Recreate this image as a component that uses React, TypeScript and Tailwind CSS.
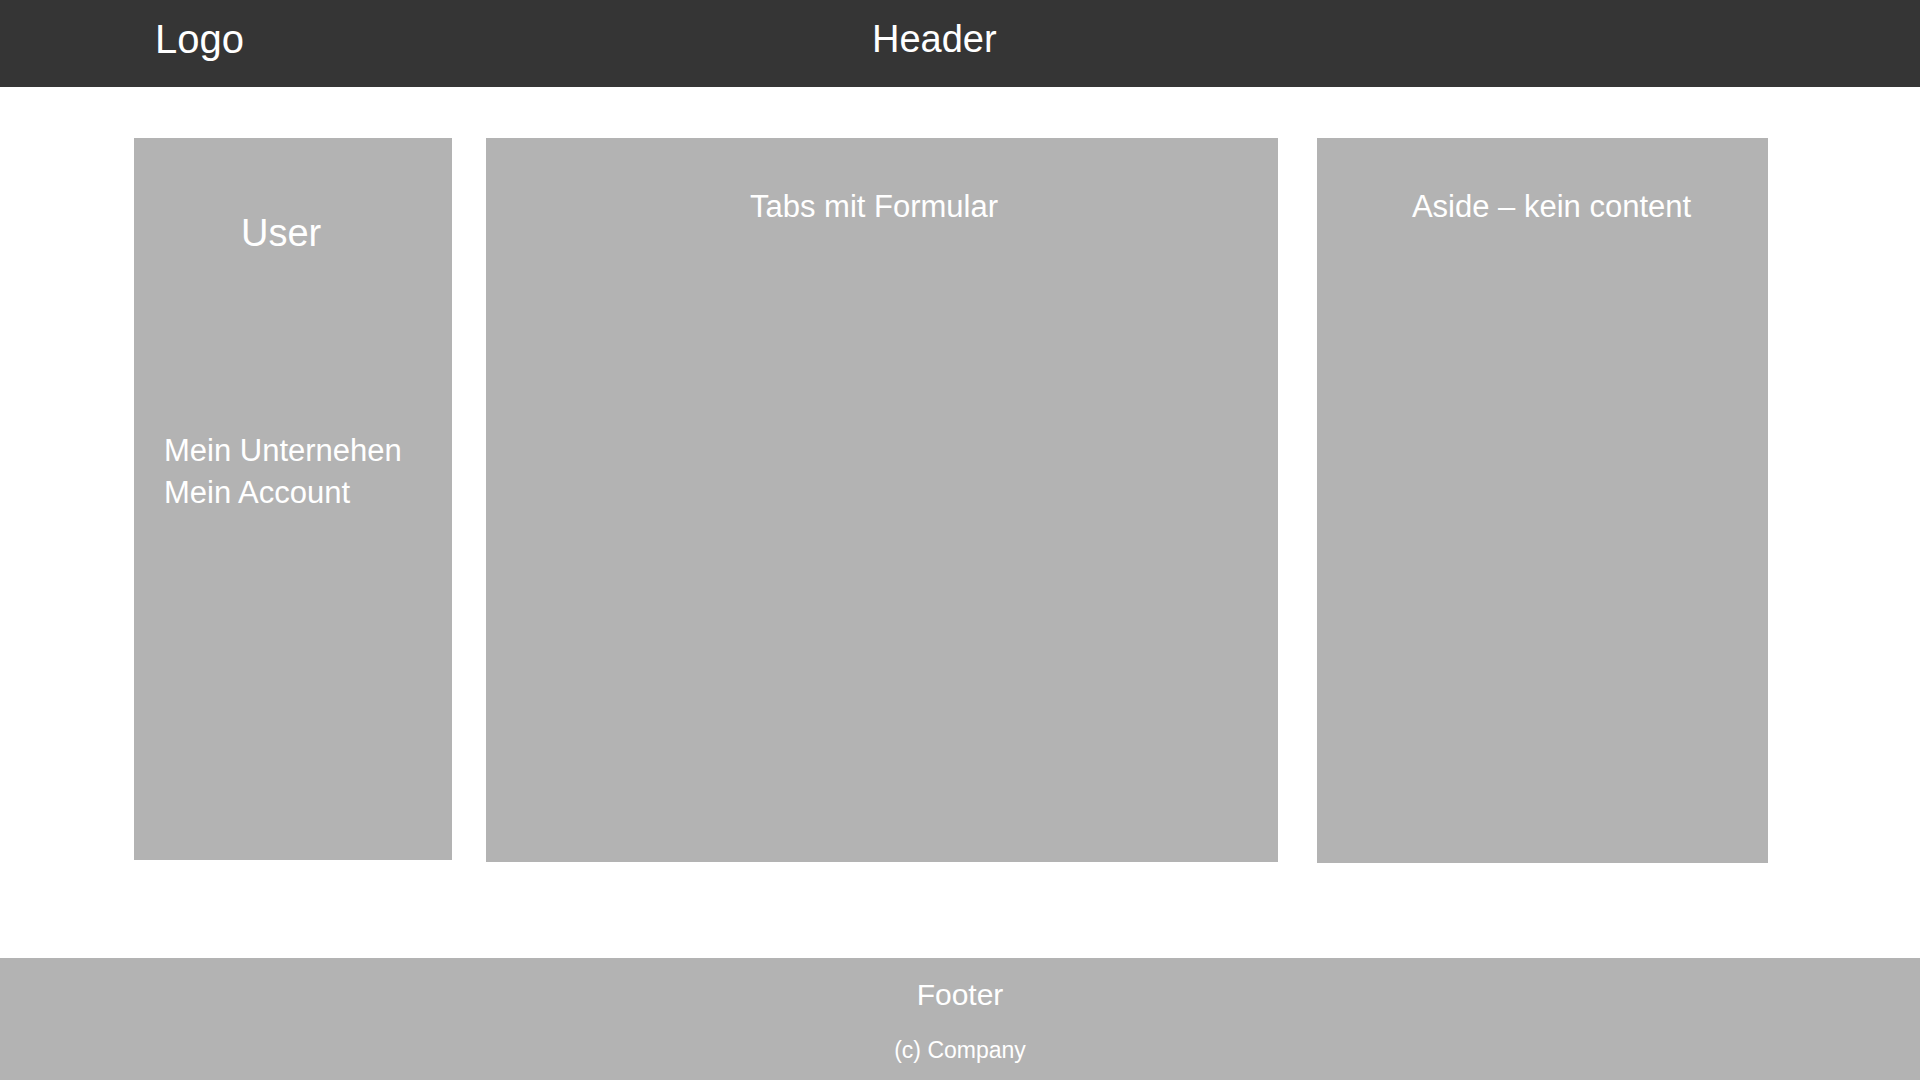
const font = { fontFamily: '"Liberation Sans", Arial, sans-serif' }

export default function App() {
  return (
    <div className="min-h-screen flex flex-col bg-white text-white" style={font}>
      {/* Header */}
      <header className="h-[87px] bg-[#353535] flex items-start pt-[19px] pl-[155px]">
        <span className="text-[40px] leading-none">Logo</span>
        <span className="text-[38px] leading-none mt-[1px] ml-[628px]">Header</span>
      </header>

      {/* Main columns */}
      <main className="flex-1 flex items-start gap-[34px] pt-[51px] pl-[134px]">
        <section className="w-[318px] h-[722px] bg-[#b3b3b3] flex flex-col pt-[76px]">
          <h2 className="text-[38px] leading-none pl-[107px]">User</h2>
          <ul className="mt-[178px] pl-[30px] text-[31px] leading-[42px]">
            <li>Mein Unternehen</li>
            <li>Mein Account</li>
          </ul>
        </section>

        <section className="w-[792px] h-[724px] bg-[#b3b3b3] pt-[53px] pr-[16px] text-center">
          <h2 className="text-[31px] leading-none">Tabs mit Formular</h2>
        </section>

        <section className="w-[451px] h-[725px] bg-[#b3b3b3] pt-[53px] pl-[18px] text-center ml-[5px]">
          <h2 className="text-[31px] leading-none">Aside – kein content</h2>
        </section>
      </main>

      {/* Footer */}
      <footer className="h-[122px] bg-[#b3b3b3] flex flex-col items-center pt-[22px]">
        <p className="text-[30px] leading-none">Footer</p>
        <p className="text-[23px] leading-none mt-[29px]">(c) Company</p>
      </footer>
    </div>
  )
}
